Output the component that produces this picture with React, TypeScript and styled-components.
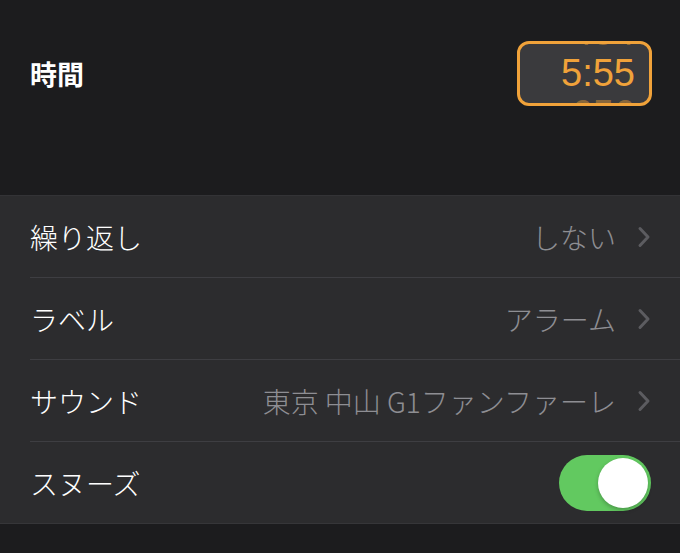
import styled, { createGlobalStyle } from "styled-components";

const GlobalStyle = createGlobalStyle`
  html, body {
    margin: 0;
    padding: 0;
    background: #1c1c1e;
  }
  body {
    font-family: "Noto Sans CJK JP", "Noto Sans", sans-serif;
    -webkit-font-smoothing: antialiased;
  }
`;

const Screen = styled.div`
  width: 680px;
  height: 553px;
  background: #1c1c1e;
  overflow: hidden;
`;

const TimeSection = styled.div`
  height: 195px;
  box-sizing: border-box;
  padding: 41px 28px 0 30px;
`;

const TimeRow = styled.div`
  height: 65px;
  display: flex;
  align-items: center;
  justify-content: space-between;
`;

const TimeLabel = styled.span`
  color: #ffffff;
  font-size: 27px;
  font-weight: 700;
  line-height: 1;
`;

const PickerBox = styled.div`
  width: 135px;
  height: 65px;
  box-sizing: border-box;
  border: 3px solid #f0a23a;
  border-radius: 12px;
  background: #3a3a3d;
  overflow: hidden;
  display: flex;
  flex-direction: column;
  align-items: flex-end;
  justify-content: center;
  padding-right: 14px;
`;

const Wheel = styled.div`
  display: flex;
  flex-direction: column;
  align-items: flex-end;
`;

const WheelLine = styled.div<{ faded?: boolean }>`
  height: 41px;
  line-height: 41px;
  font-family: "Liberation Sans", Arial, sans-serif;
  font-size: 38px;
  color: ${({ faded }) => (faded ? "rgba(240, 162, 58, 0.45)" : "#f0a23a")};
  white-space: nowrap;
`;

const Colon = styled.span<{ hidden?: boolean }>`
  visibility: ${({ hidden }) => (hidden ? "hidden" : "visible")};
`;

const Group = styled.div`
  background: #2c2c2e;
  border-top: 1px solid #333336;
  border-bottom: 1px solid #363639;
`;

const Row = styled.div<{ last?: boolean }>`
  height: 81px;
  display: flex;
  align-items: center;
  justify-content: space-between;
  margin-left: 30px;
  padding-right: 29px;
  border-bottom: ${({ last }) => (last ? "none" : "1px solid #3e3e42")};
`;

const Label = styled.span`
  color: #ffffff;
  font-size: 28px;
  font-weight: 300;
  line-height: 1;
`;

const Detail = styled.div`
  display: flex;
  align-items: center;
  gap: 21px;
`;

const Value = styled.span`
  color: #8e8e93;
  font-size: 28px;
  font-weight: 300;
  line-height: 1;
`;

const Switch = styled.div<{ on: boolean }>`
  width: 92px;
  height: 56px;
  border-radius: 28px;
  background: ${({ on }) => (on ? "#62c960" : "#39393d")};
  box-sizing: border-box;
  padding: 3px;
  display: flex;
  justify-content: ${({ on }) => (on ? "flex-end" : "flex-start")};
`;

const Knob = styled.div`
  width: 50px;
  height: 50px;
  border-radius: 50%;
  background: #ffffff;
  box-shadow: 0 2px 4px rgba(0, 0, 0, 0.25);
`;

const Chevron = () => (
  <svg width="14" height="22" viewBox="0 0 14 22">
    <path
      d="M3 2.5 L11 11 L3 19.5"
      fill="none"
      stroke="#5c5c60"
      strokeWidth="3"
      strokeLinecap="round"
      strokeLinejoin="round"
    />
  </svg>
);

const rows = [
  { label: "繰り返し", value: "しない" },
  { label: "ラベル", value: "アラーム" },
  { label: "サウンド", value: "東京 中山 G1ファンファーレ" },
];

export default function App() {
  return (
    <Screen>
      <GlobalStyle />
      <TimeSection>
        <TimeRow>
          <TimeLabel>時間</TimeLabel>
          <PickerBox>
            <Wheel>
              <WheelLine faded>
                4<Colon hidden>:</Colon>54
              </WheelLine>
              <WheelLine>
                5<Colon>:</Colon>55
              </WheelLine>
              <WheelLine faded>
                6<Colon hidden>:</Colon>56
              </WheelLine>
            </Wheel>
          </PickerBox>
        </TimeRow>
      </TimeSection>
      <Group>
        {rows.map((r) => (
          <Row key={r.label}>
            <Label>{r.label}</Label>
            <Detail>
              <Value>{r.value}</Value>
              <Chevron />
            </Detail>
          </Row>
        ))}
        <Row last>
          <Label>スヌーズ</Label>
          <Switch on>
            <Knob />
          </Switch>
        </Row>
      </Group>
    </Screen>
  );
}
